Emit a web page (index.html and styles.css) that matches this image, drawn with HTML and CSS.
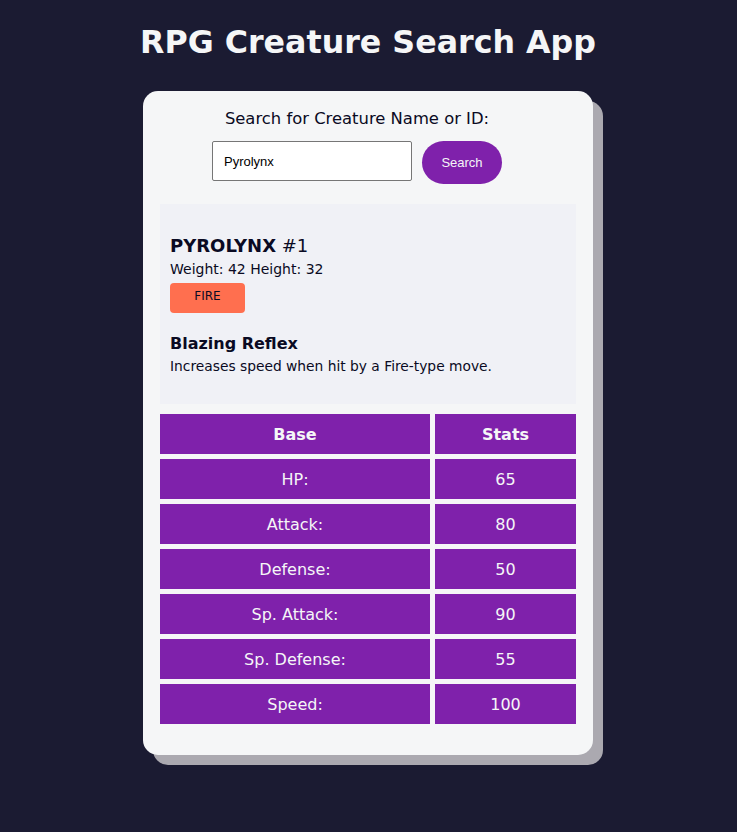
FILE: index.html
```html
<!DOCTYPE html>
<html lang="en">
<head>
<meta charset="utf-8">
<title>RPG Creature Search App</title>
<link rel="stylesheet" href="styles.css">
</head>
<body>
<h1 class="title">RPG Creature Search App</h1>
<main class="card">
  <form class="search">
    <label class="search-label" for="search-input">Search for Creature Name or ID:</label>
    <div class="search-row">
      <input class="search-input" id="search-input" type="text" value="Pyrolynx">
      <button class="search-btn" type="button">Search</button>
    </div>
  </form>
  <section class="info">
    <div class="name-line"><span class="name">PYROLYNX</span> <span class="id">#1</span></div>
    <div class="size">Weight: 42 Height: 32</div>
    <div class="types"><span class="type fire">FIRE</span></div>
    <div class="ability">Blazing Reflex</div>
    <div class="ability-desc">Increases speed when hit by a Fire-type move.</div>
  </section>
  <div class="stats">
    <div class="cell head">Base</div><div class="cell head">Stats</div>
    <div class="cell">HP:</div><div class="cell">65</div>
    <div class="cell">Attack:</div><div class="cell">80</div>
    <div class="cell">Defense:</div><div class="cell">50</div>
    <div class="cell">Sp. Attack:</div><div class="cell">90</div>
    <div class="cell">Sp. Defense:</div><div class="cell">55</div>
    <div class="cell">Speed:</div><div class="cell">100</div>
  </div>
</main>
</body>
</html>
```
FILE: styles.css
```css
* { box-sizing: border-box; }
html, body { margin: 0; padding: 0; }
body {
  background: #1b1b32;
  color: #0a0a23;
  font-family: "DejaVu Sans", Verdana, sans-serif;
  min-height: 832px;
  display: flex;
  flex-direction: column;
  align-items: center;
  padding-right: 1px;
}
.title {
  color: #f5f6f7;
  font-size: 31.7px;
  font-weight: bold;
  margin: 22px 0 0;
  line-height: 40px;
  height: 69px;
}
.card {
  width: 450px;
  background: #f5f6f7;
  border-radius: 15px;
  box-shadow: 10px 10px 0 #aba9b0;
  padding: 17px 17px 31px;
}
.search {
  display: flex;
  flex-direction: column;
  align-items: center;
  padding-right: 22px;
}
.search-label {
  font-size: 16.4px;
  line-height: 22px;
  margin-bottom: 11px;
}
.search-row {
  display: flex;
  align-items: flex-start;
  gap: 10px;
}
.search-input {
  width: 200px;
  height: 40px;
  border: 1px solid #767676;
  border-radius: 2px;
  background: #fff;
  font-family: "Liberation Sans", Arial, sans-serif;
  font-size: 13px;
  padding: 0 11px;
  color: #000;
}
.search-btn {
  width: 80px;
  height: 43px;
  border: none;
  border-radius: 22px;
  background: #7f21ab;
  color: #f5f6f7;
  font-family: "Liberation Sans", Arial, sans-serif;
  font-size: 13px;
}
.info {
  margin-top: 20px;
  height: 200px;
  background: #f0f1f6;
  padding: 31px 10px 0;
}
.name-line { font-size: 18px; line-height: 22px; }
.name { font-weight: bold; }
.size { font-size: 14px; line-height: 20px; margin-top: 2px; }
.types { display: flex; margin-top: 4px; }
.type {
  width: 75px;
  height: 30px;
  border-radius: 4px;
  font-size: 12px;
  display: flex;
  justify-content: center;
  padding-top: 6px;
}
.fire { background: #ff6f4f; }
.ability { font-size: 16px; font-weight: bold; line-height: 22px; margin-top: 20px; }
.ability-desc { font-size: 13.8px; line-height: 22px; }
.stats {
  margin-top: 10px;
  display: grid;
  grid-template-columns: 270px 141px;
  grid-auto-rows: 40px;
  gap: 5px;
}
.cell {
  background: #7f21ab;
  color: #f5f6f7;
  font-size: 16px;
  display: flex;
  align-items: center;
  justify-content: center;
}
.head { font-weight: bold; font-size: 16px; }
```
